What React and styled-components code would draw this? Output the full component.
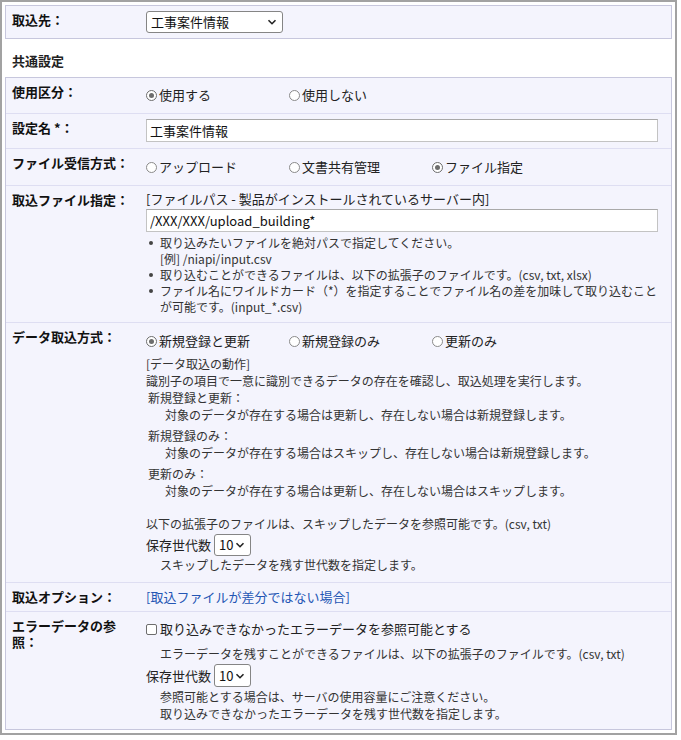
import React from 'react';
import styled, { createGlobalStyle } from 'styled-components';

const GlobalStyle = createGlobalStyle`
    html, body {
        margin: 0;
        padding: 0;
        background: #ffffff;
    }
    body {
        font-family: "Noto Sans CJK JP", "Noto Sans", sans-serif;
        color: #222;
    }
`;

const Frame = styled.div`
    box-sizing: border-box;
    width: 677px;
    border: 2px solid #a2a2a2;
    padding: 3px;
    background: #fff;
`;

const Panel = styled.div`
    background: #f4f4fd;
    border: 1px solid #c7c7dd;
`;

const Row = styled.div`
    display: grid;
    grid-template-columns: 140px 1fr;
    & + & {
        border-top: 1px solid #dedef2;
    }
`;

const Label = styled.div`
    padding: 6px 8px 5px 6px;
    font-size: 13px;
    line-height: 16px;
    font-weight: bold;
    color: #111;
`;

const Cell = styled.div`
    padding: ${p => p.pt || 5}px 0 ${p => p.pb || 6}px 0;
    font-size: 13px;
    line-height: 16px;
    min-width: 0;
`;

const SectionTitle = styled.div`
    padding: 14px 7px 8px;
    font-size: 13px;
    line-height: 16px;
    font-weight: bold;
    color: #222;
`;

const OptionLine = styled.div`
    display: flex;
    align-items: center;
    height: 24px;
`;

const Option = styled.label`
    display: flex;
    align-items: center;
    width: 143px;
    font-size: 13px;
    color: #222;
    white-space: nowrap;
`;

const RadioDot = styled.span`
    box-sizing: border-box;
    width: 11px;
    height: 11px;
    border-radius: 50%;
    border: 1px solid ${p => (p.on ? '#6d6d6d' : '#8a8a8a')};
    margin-right: 2px;
    display: flex;
    align-items: center;
    justify-content: center;
    background: #fff;
    &::after {
        content: '';
        display: ${p => (p.on ? 'block' : 'none')};
        width: 5px;
        height: 5px;
        border-radius: 50%;
        background: #6d6d6d;
    }
`;

const CheckBox = styled.span`
    box-sizing: border-box;
    width: 11px;
    height: 11px;
    border: 1px solid #6d6d6d;
    border-radius: 2px;
    background: #fff;
    margin-right: 3px;
`;

const TextInput = styled.input`
    box-sizing: border-box;
    display: block;
    width: 512px;
    height: 23px;
    margin-top: ${p => p.mt || 0}px;
    border: 1px solid #c3c3c3;
    border-top-color: #a9a9a9;
    background: #fff;
    padding: 0 3px;
    font-family: "Noto Sans CJK JP", "Noto Sans", sans-serif;
    font-size: 13px;
    color: #111;
    outline: none;
`;

const SelectBox = styled.div`
    box-sizing: border-box;
    display: inline-flex;
    align-items: center;
    justify-content: space-between;
    width: ${p => p.w}px;
    height: ${p => p.h || 22}px;
    padding: 0 5px 0 4px;
    border: 1px solid #858585;
    border-radius: 3px;
    background: #fff;
    font-size: 13px;
    color: #111;
    svg {
        flex: none;
    }
`;

const Chevron = () => (
    <svg width="10" height="10" viewBox="0 0 10 10">
        <path d="M1.5 3.2 L5 6.7 L8.5 3.2" fill="none" stroke="#222" strokeWidth="1.6" />
    </svg>
);

const Select = ({ w, h, value }) => (
    <SelectBox w={w} h={h}>
        <span>{value}</span>
        <Chevron />
    </SelectBox>
);

const Bullets = styled.ul`
    margin: 3px 0 0;
    padding: 0 14px 0 0;
    list-style: none;
    font-size: 12px;
    line-height: 16px;
    color: #333;
    li {
        position: relative;
        padding-left: 14px;
    }
    li::before {
        content: '';
        position: absolute;
        left: 3px;
        top: 6px;
        width: 4px;
        height: 4px;
        border-radius: 50%;
        background: #444;
    }
`;

const Desc = styled.div`
    font-size: 12px;
    line-height: 17px;
    color: #333;
    padding-left: ${p => p.indent || 0}px;
    margin-top: ${p => p.mt || 0}px;
`;

const GenLine = styled.div`
    display: flex;
    align-items: center;
    gap: 3px;
    margin-top: ${p => p.mt || 0}px;
    font-size: 13px;
    color: #222;
`;

const Link = styled.a`
    color: #2456b4;
    text-decoration: none;
    cursor: pointer;
`;

const Radios = ({ items, selected }) => (
    <OptionLine>
        {items.map((t, i) => (
            <Option key={t}>
                <RadioDot on={i === selected} />
                {t}
            </Option>
        ))}
    </OptionLine>
);

const App = () => {
    return (
        <>
            <GlobalStyle />
            <Frame>
                <Panel>
                    <Row>
                        <Label>取込先：</Label>
                        <Cell pb={5}>
                            <Select w={137} value="工事案件情報" />
                        </Cell>
                    </Row>
                </Panel>

                <SectionTitle>共通設定</SectionTitle>

                <Panel>
                    <Row>
                        <Label>使用区分：</Label>
                        <Cell>
                            <Radios items={['使用する', '使用しない']} selected={0} />
                        </Cell>
                    </Row>
                    <Row>
                        <Label>設定名 *：</Label>
                        <Cell>
                            <TextInput readOnly value="工事案件情報" />
                        </Cell>
                    </Row>
                    <Row>
                        <Label>ファイル受信方式：</Label>
                        <Cell pt={6}>
                            <Radios items={['アップロード', '文書共有管理', 'ファイル指定']} selected={2} />
                        </Cell>
                    </Row>
                    <Row>
                        <Label>取込ファイル指定：</Label>
                        <Cell pb={7}>
                            <div>[ファイルパス - 製品がインストールされているサーバー内]</div>
                            <TextInput readOnly mt={2} value="/XXX/XXX/upload_building*" />
                            <Bullets>
                                <li>
                                    取り込みたいファイルを絶対パスで指定してください。
                                    <br />
                                    [例] /niapi/input.csv
                                </li>
                                <li>取り込むことができるファイルは、以下の拡張子のファイルです。(csv, txt, xlsx)</li>
                                <li>ファイル名にワイルドカード（*）を指定することでファイル名の差を加味して取り込むことが可能です。(input_*.csv)</li>
                            </Bullets>
                        </Cell>
                    </Row>
                    <Row>
                        <Label>データ取込方式：</Label>
                        <Cell pt={6} pb={9}>
                            <Radios items={['新規登録と更新', '新規登録のみ', '更新のみ']} selected={0} />
                            <Desc mt={2}>
                                [データ取込の動作]
                                <br />
                                識別子の項目で一意に識別できるデータの存在を確認し、取込処理を実行します。
                            </Desc>
                            <Desc indent={2}>新規登録と更新：</Desc>
                            <Desc indent={19}>対象のデータが存在する場合は更新し、存在しない場合は新規登録します。</Desc>
                            <Desc indent={2} mt={4}>新規登録のみ：</Desc>
                            <Desc indent={19}>対象のデータが存在する場合はスキップし、存在しない場合は新規登録します。</Desc>
                            <Desc indent={2} mt={4}>更新のみ：</Desc>
                            <Desc indent={19}>対象のデータが存在する場合は更新し、存在しない場合はスキップします。</Desc>
                            <Desc mt={16}>以下の拡張子のファイルは、スキップしたデータを参照可能です。(csv, txt)</Desc>
                            <GenLine mt={2}>
                                保存世代数
                                <Select w={37} value="10" />
                            </GenLine>
                            <Desc indent={14}>スキップしたデータを残す世代数を指定します。</Desc>
                        </Cell>
                    </Row>
                    <Row>
                        <Label>取込オプション：</Label>
                        <Cell pt={6} pb={6}>
                            <Link>[取込ファイルが差分ではない場合]</Link>
                        </Cell>
                    </Row>
                    <Row>
                        <Label>エラーデータの参照：</Label>
                        <Cell pb={7}>
                            <OptionLine>
                                <CheckBox />
                                取り込みできなかったエラーデータを参照可能とする
                            </OptionLine>
                            <Desc indent={14} mt={4}>エラーデータを残すことができるファイルは、以下の拡張子のファイルです。(csv, txt)</Desc>
                            <GenLine mt={2}>
                                保存世代数
                                <Select w={37} h={23} value="10" />
                            </GenLine>
                            <Desc indent={14} mt={1}>
                                参照可能とする場合は、サーバの使用容量にご注意ください。
                                <br />
                                取り込みできなかったエラーデータを残す世代数を指定します。
                            </Desc>
                        </Cell>
                    </Row>
                </Panel>
            </Frame>
        </>
    );
};

export default App;
